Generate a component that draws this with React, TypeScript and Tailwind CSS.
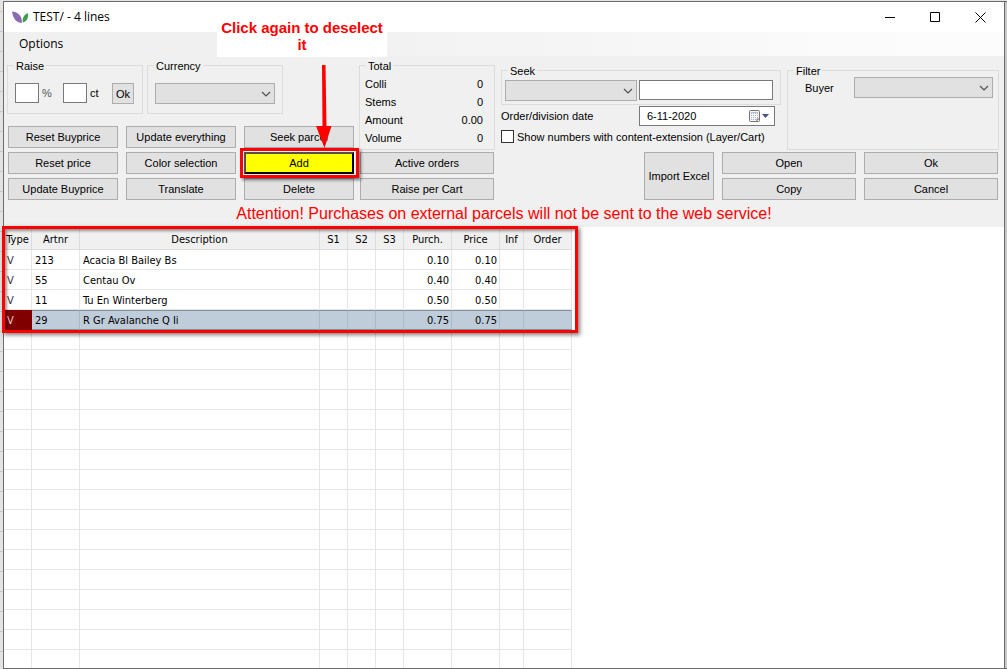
import React from 'react';

const uiFont = "font-['Liberation_Sans',Arial,sans-serif]";
const segoeFont = "font-['Open_Sans','Noto_Sans',sans-serif]";
const tableFont = "font-['DejaVu_Sans_Condensed','DejaVu_Sans',sans-serif]";

function PushButton({ children, className = 'h-[22px]' }: { children: React.ReactNode; className?: string }) {
  return (
    <button type="button" className={`${className} border border-[#adadad] bg-[#e1e1e1] text-center leading-4 whitespace-nowrap`}>
      {children}
    </button>
  );
}

function Group({ title, className, children }: { title: string; className: string; children: React.ReactNode }) {
  return (
    <fieldset className={`min-w-0 border border-[#dcdcdc] ${className}`}>
      <legend className="ml-1.5 h-4 px-0.5 leading-[18px]">{title}</legend>
      {children}
    </fieldset>
  );
}

function Combo({ label, className }: { label: string; className: string }) {
  return (
    <span className={`relative block ${className}`}>
      <select aria-label={label} className="block h-[21px] w-full appearance-none border border-[#adadad] bg-[#e1e1e1] px-1">
        <option></option>
      </select>
      <svg className="pointer-events-none absolute top-[7px] right-1 h-2 w-[10px]" viewBox="0 0 10 8" fill="none" stroke="#505050" strokeWidth="1.2">
        <path d="M1 2l4 4 4-4" />
      </svg>
    </span>
  );
}

const totals = [
  ['Colli', '0'],
  ['Stems', '0'],
  ['Amount', '0.00'],
  ['Volume', '0'],
];

const headers = ['Type', 'Artnr', 'Description', 'S1', 'S2', 'S3', 'Purch.', 'Price', 'Inf', 'Order'];

const rows = [
  { type: 'V', art: '213', name: 'Acacia Bl Bailey Bs', price: '0.10' },
  { type: 'V', art: '55', name: 'Centau Ov', price: '0.40' },
  { type: 'V', art: '11', name: 'Tu En Winterberg', price: '0.50' },
  { type: 'V', art: '29', name: 'R Gr Avalanche Q Ii', price: '0.75', selected: true },
];

const emptyRows = Array.from({ length: 17 }, (_, i) => i);

function TitleBar() {
  return (
    <header className={`flex h-[30px] shrink-0 items-center bg-white pr-px pl-2 ${segoeFont}`}>
      <svg className="h-[14px] w-[18px]" viewBox="0 0 18 14">
        <path d="M0 1.500C5 1.500 10.500 5.500 9.800 13C4 12.500 1 8.500 0 1.500Z" fill="#8a6bb0" />
        <path d="M16 3C16.500 8 15 11.500 10.800 12.500C10 8 12 4.500 16 3Z" fill="#3f9f4b" />
      </svg>
      <h1 className="ml-[3px] flex-1 text-xs leading-4">TEST/ - 4 lines</h1>
      <button type="button" aria-label="Minimize" className="grid h-full w-[45px] place-items-center">
        <svg className="size-[11px]" viewBox="0 0 11 11" stroke="#000" fill="none"><path d="M0 5.500h10" /></svg>
      </button>
      <button type="button" aria-label="Maximize" className="grid h-full w-[45px] place-items-center">
        <svg className="size-[11px]" viewBox="0 0 11 11" stroke="#000" fill="none"><path d="M.5.5h9v9h-9z" /></svg>
      </button>
      <button type="button" aria-label="Close" className="grid h-full w-[45px] place-items-center">
        <svg className="size-[11px]" viewBox="0 0 11 11" stroke="#000" fill="none"><path d="M.5.5l10 10M10.500.5l-10 10" /></svg>
      </button>
    </header>
  );
}

function LeftTools() {
  return (
    <section className="w-[347px] shrink-0 pt-px">
      <div className="flex gap-1">
        <Group title="Raise" className="h-[57px] w-[136px]">
          <div className="flex items-center pt-2 pl-[7px]">
            <input id="pct" className="h-5 w-6 border border-[#7a7a7a] bg-white px-0.5" />
            <label htmlFor="pct" className="ml-[3px] w-[21px] text-[#555]">%</label>
            <input id="ct" className="h-5 w-6 border border-[#7a7a7a] bg-white px-0.5" />
            <label htmlFor="ct" className="ml-[3px] w-[22px]">ct</label>
            <PushButton className="mt-0.5 h-[21px] w-[22px]">Ok</PushButton>
          </div>
        </Group>
        <Group title="Currency" className="h-[57px] w-[136px]">
          <div className="pt-[10px] pl-[7px]">
            <Combo label="Currency" className="w-[120px]" />
          </div>
        </Group>
      </div>
      <div className="mt-3 ml-px grid grid-cols-3 gap-x-2 gap-y-1">
        <PushButton>Reset Buyprice</PushButton>
        <PushButton>Update everything</PushButton>
        <PushButton>Seek parcel</PushButton>
        <PushButton>Reset price</PushButton>
        <PushButton>Color selection</PushButton>
        <div className="relative grid">
          <button type="button" className="h-[22px] border-2 border-t-[#505050] border-r-black border-b-black border-l-[#505050] bg-[#ffff00] leading-4">
            Add
          </button>
          <span className="pointer-events-none absolute -top-1 -right-[5px] -bottom-1 -left-1 z-10 border-[3px] border-[#ff0000] shadow-[2px_2px_3px_rgba(0,0,0,0.5)]" />
          <svg className="pointer-events-none absolute bottom-[25px] left-[72px] z-20 h-[84px] w-4" viewBox="0 0 16 84">
            <path d="M6 0h3.500l1 62h-4zM0 61h15.500L8.500 83z" fill="#ff0000" />
          </svg>
        </div>
        <PushButton>Update Buyprice</PushButton>
        <PushButton>Translate</PushButton>
        <PushButton>Delete</PushButton>
      </div>
    </section>
  );
}

function TotalsColumn() {
  return (
    <section className="ml-[5px] w-[136px] shrink-0 pt-px">
      <Group title="Total" className="h-[93px]">
        <dl className="pt-0.5 pr-[11px] pl-[5px]">
          {totals.map(([name, value]) => (
            <div key={name} className="flex h-[18px] justify-between leading-[18px]">
              <dt>{name}</dt>
              <dd>{value}</dd>
            </div>
          ))}
        </dl>
      </Group>
      <div className="mx-px mt-0.5 grid gap-1">
        <PushButton>Active orders</PushButton>
        <PushButton>Raise per Cart</PushButton>
      </div>
    </section>
  );
}

function RightTools() {
  return (
    <section className="ml-1.5 min-w-0 flex-1 pt-1.5">
      <div className="flex gap-1.5">
        <div className="w-[280px] shrink-0">
          <Group title="Seek" className="h-[43px]">
            <div className="flex gap-0.5 pt-0.5 pl-[3px]">
              <Combo label="Seek field" className="w-[132px]" />
              <input aria-label="Seek text" className="h-5 w-[134px] border border-[#7a7a7a] bg-white px-1" />
            </div>
          </Group>
          <div className="mt-px flex h-5 items-center">
            <label htmlFor="date" className="w-[138px]">Order/division date</label>
            <span className="relative block">
              <input id="date" defaultValue="6-11-2020" className="block h-5 w-[136px] border border-[#7a7a7a] bg-white pr-7 pl-[7px]" />
              <svg className="pointer-events-none absolute top-1 right-1.5 h-3 w-5" viewBox="0 0 20 12">
                <rect x=".5" y=".5" width="10" height="11" rx="1" fill="#f4f5f8" stroke="#7b7074" />
                <path d="M2 3.500h7M2 5.500h7M2 7.500h7M2 9.500h5" stroke="#a8b2c4" strokeDasharray="1 1" />
                <path d="M2 2.500h7" stroke="#b8c0ce" />
                <path d="M8 11.500V9h2.500" fill="none" stroke="#7b7074" />
                <path d="M13 4h7l-3.500 4z" fill="#3e5689" />
              </svg>
            </span>
          </div>
          <label className="mt-1 flex h-[13px] items-center gap-[3px] whitespace-nowrap">
            <input type="checkbox" className="size-[13px] shrink-0 appearance-none border border-[#333] bg-white" />
            Show numbers with content-extension (Layer/Cart)
          </label>
        </div>
        <Group title="Filter" className="h-[88px] flex-1">
          <div className="flex items-center pr-[5px] pl-[17px]">
            <span className="flex-1">Buyer</span>
            <Combo label="Buyer" className="-mt-px w-[139px]" />
          </div>
        </Group>
      </div>
      <div className="mt-0.5 mr-px ml-[143px] grid grid-cols-[70px_1fr_1fr] gap-x-2 gap-y-1">
        <PushButton className="row-span-2">Import Excel</PushButton>
        <PushButton>Open</PushButton>
        <PushButton>Ok</PushButton>
        <PushButton>Copy</PushButton>
        <PushButton>Cancel</PushButton>
      </div>
    </section>
  );
}

const cell = 'overflow-hidden border-r border-b border-[#e6e6e6] whitespace-nowrap';
const cellSelected = 'overflow-hidden border-r border-y border-r-[#a9b9c6] border-y-[#7e919f] bg-[#bfcddb] whitespace-nowrap';

function LinesTable() {
  return (
    <div className={`relative min-h-0 flex-1 bg-white text-[11px] leading-4 ${tableFont}`}>
      <div className="h-full overflow-hidden">
        <table className="w-[568px] table-fixed border-separate border-spacing-0">
          <colgroup>
            <col className="w-[28px]" /><col className="w-[48px]" /><col className="w-[240px]" />
            <col className="w-[28px]" /><col className="w-[28px]" /><col className="w-[28px]" />
            <col className="w-[48px]" /><col className="w-[48px]" /><col className="w-[24px]" /><col className="w-[48px]" />
          </colgroup>
          <thead>
            <tr className="h-[23px]">
              {headers.map((h) => (
                <th key={h} className="border-r border-b border-[#dcdcdc] bg-[#f0f0f0] p-0 pt-1 text-center font-normal">{h}</th>
              ))}
            </tr>
          </thead>
          <tbody>
            {rows.map((r) => {
              const c = r.selected ? cellSelected : cell;
              return (
                <tr key={r.art} className="h-5">
                  <td className={r.selected ? 'border-y border-r border-[#800000] bg-[#800000] pt-0.5 pl-[3px] text-[#e8d0d0]' : `${cell} pt-0.5 pl-[3px] text-[#333]`}>{r.type}</td>
                  <td className={`${c} pt-0.5 pl-[3px]`}>{r.art}</td>
                  <td className={`${c} pt-0.5 pl-[3px]`}>{r.name}</td>
                  <td className={c} /><td className={c} /><td className={c} />
                  <td className={`${c} pt-0.5 pr-0.5 text-right`}>{r.price}</td>
                  <td className={`${c} pt-0.5 pr-0.5 text-right`}>{r.price}</td>
                  <td className={c} /><td className={c} />
                </tr>
              );
            })}
            {emptyRows.map((i) => (
              <tr key={i} className="h-5">
                {headers.map((h) => <td key={h} className={cell} />)}
              </tr>
            ))}
          </tbody>
        </table>
      </div>
      <span className="pointer-events-none absolute -top-px -left-0.5 h-[107px] w-[576px] border-[3px] border-[#ff0000] shadow-[2px_2px_4px_rgba(0,0,0,0.5),inset_2px_2px_3px_rgba(0,0,0,0.4)]" />
    </div>
  );
}

export default function App() {
  return (
    <div className="h-screen overflow-hidden bg-[#dedede] bg-[repeating-linear-gradient(to_bottom,#e3e3e3_0px,#e3e3e3_11px,#c8c8c8_11px,#c8c8c8_12px,#e3e3e3_12px,#e3e3e3_20px)] pt-px pl-[3px] text-black">
      <main className="relative flex h-full flex-col border border-r-0 border-[#6b6b6b] bg-white">
        <div className="absolute inset-y-0 right-0 z-10 w-[3px] border-l border-[#6b6b6b] bg-[#c8c8c8]" />
        <div className="flex min-h-0 flex-1 flex-col pr-[3px]">
          <TitleBar />
          <nav className={`flex h-6 shrink-0 items-center bg-linear-to-r from-[#f0f0f0] from-30% to-[#fcfcfc] to-90% pl-[15px] text-xs ${segoeFont}`}>
            <button type="button" className="leading-4">Options</button>
          </nav>
          <div className={`h-[171px] shrink-0 bg-[#f0f0f0] text-[11px] leading-4 ${uiFont}`}>
            <div className="flex pr-[5px] pl-[3px]">
              <LeftTools />
              <TotalsColumn />
              <RightTools />
            </div>
            <p className="mt-1 text-center text-base leading-5 text-[#ff0000]">
              Attention! Purchases on external parcels will not be sent to the web service!
            </p>
          </div>
          <LinesTable />
        </div>
        <p className="absolute top-[17px] left-[213px] h-[38px] w-[170px] bg-white text-center font-['Liberation_Sans',Arial,sans-serif] text-[15px] leading-[17px] font-bold text-[#ff0000]">
          Click again to deselect it
        </p>
      </main>
    </div>
  );
}
